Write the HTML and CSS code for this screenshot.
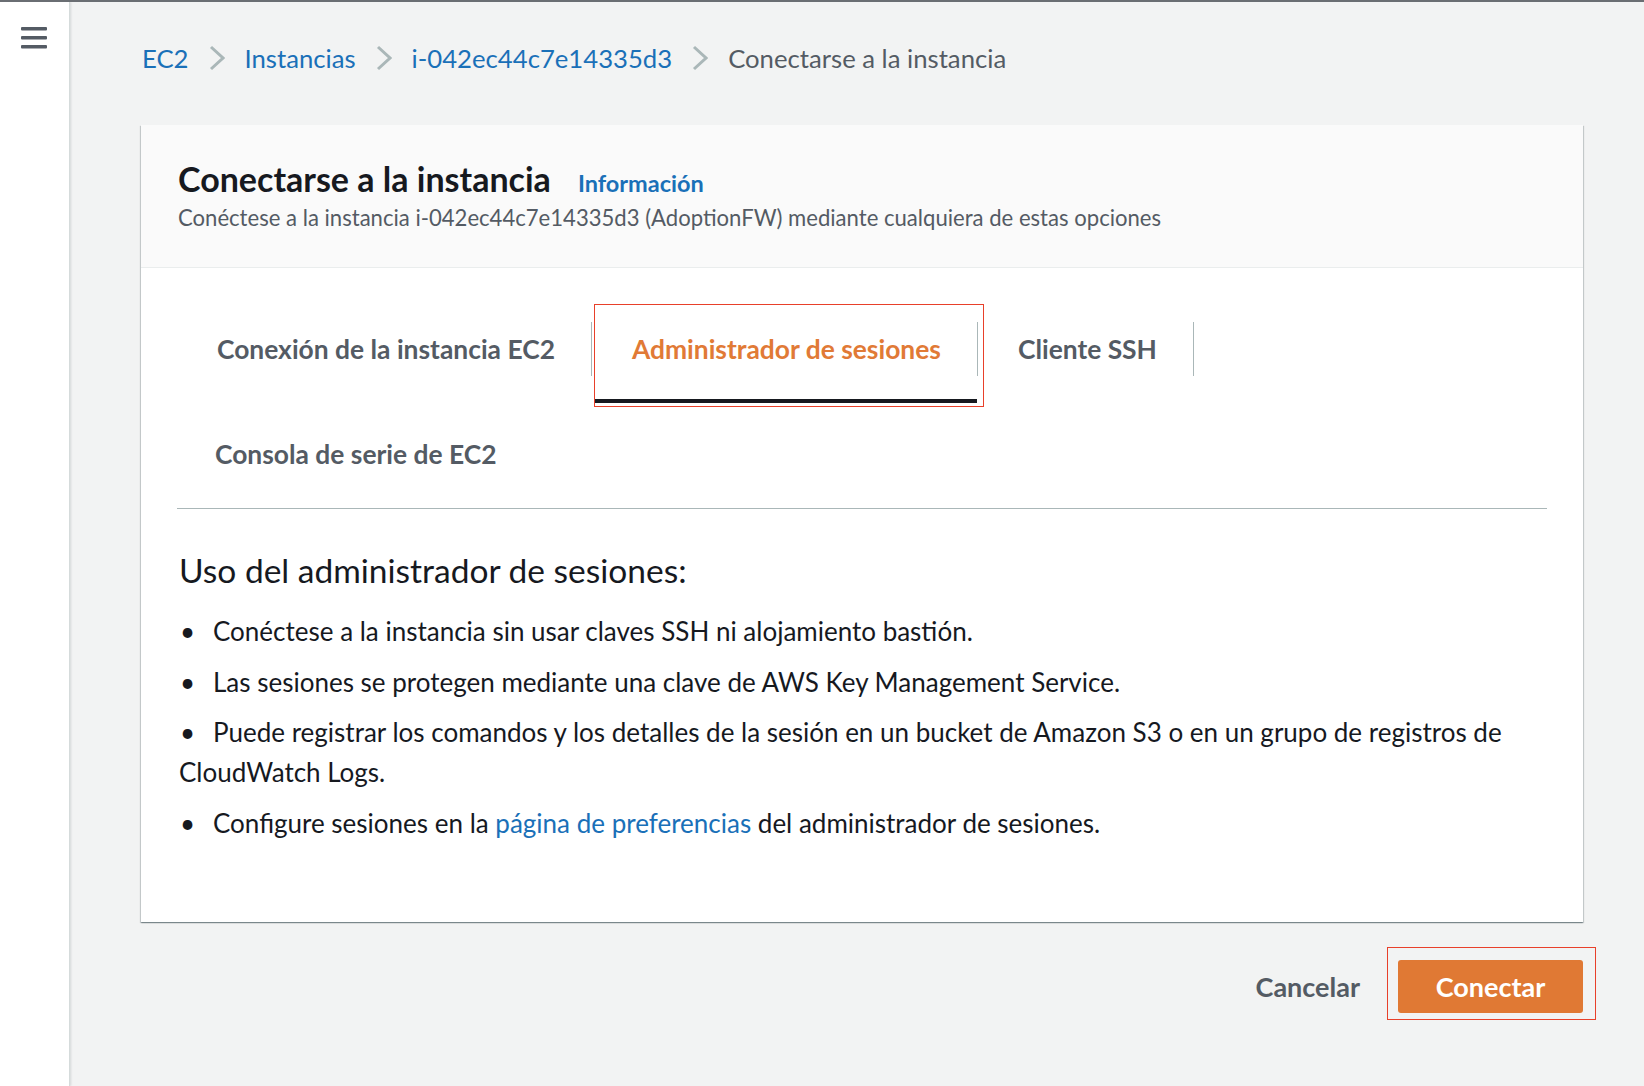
FILE: index.html
```html
<!DOCTYPE html>
<html lang="es">
<head>
<meta charset="utf-8">
<title>Conectarse a la instancia</title>
<link rel="stylesheet" href="styles.css">
</head>
<body>
<div class="layout">
  <aside class="sidebar">
    <svg class="menu-icon" width="26" height="22" viewBox="0 0 26 22" aria-hidden="true">
      <rect x="0" y="0" width="26" height="3.5" rx="1" fill="#545b64"/>
      <rect x="0" y="9" width="26" height="3.5" rx="1" fill="#545b64"/>
      <rect x="0" y="18" width="26" height="3.5" rx="1" fill="#545b64"/>
    </svg>
  </aside>
  <main class="main">
    <nav class="breadcrumbs">
      <a class="crumb link" href="#">EC2</a>
      <svg class="chev" width="16" height="26" viewBox="0 0 16 26" aria-hidden="true"><polyline points="2,2 14,13 2,24" fill="none" stroke="#aab7b8" stroke-width="3"/></svg>
      <a class="crumb link" href="#">Instancias</a>
      <svg class="chev" width="16" height="26" viewBox="0 0 16 26" aria-hidden="true"><polyline points="2,2 14,13 2,24" fill="none" stroke="#aab7b8" stroke-width="3"/></svg>
      <a class="crumb link" href="#">i-042ec44c7e14335d3</a>
      <svg class="chev" width="16" height="26" viewBox="0 0 16 26" aria-hidden="true"><polyline points="2,2 14,13 2,24" fill="none" stroke="#aab7b8" stroke-width="3"/></svg>
      <span class="crumb current">Conectarse a la instancia</span>
    </nav>

    <section class="card">
      <header class="card-header">
        <div class="title-row">
          <h1 class="title">Conectarse a la instancia</h1>
          <a class="info link" href="#">Información</a>
        </div>
        <p class="subtitle">Conéctese a la instancia i-042ec44c7e14335d3 (AdoptionFW) mediante cualquiera de estas opciones</p>
      </header>

      <div class="card-body">
        <div class="tabs">
          <div class="tab"><span class="tab-label">Conexión de la instancia EC2</span></div>
          <div class="tab active"><span class="tab-label">Administrador de sesiones</span><span class="annot annot-tab"></span></div>
          <div class="tab"><span class="tab-label">Cliente SSH</span></div>
          <div class="tab-break"></div>
          <div class="tab last"><span class="tab-label">Consola de serie de EC2</span></div>
        </div>

        <div class="content">
          <h2 class="section-title">Uso del administrador de sesiones:</h2>
          <ul class="bullets">
            <li>Conéctese a la instancia sin usar claves SSH ni alojamiento bastión.</li>
            <li>Las sesiones se protegen mediante una clave de AWS Key Management Service.</li>
            <li>Puede registrar los comandos y los detalles de la sesión en un bucket de Amazon S3 o en un grupo de registros de CloudWatch Logs.</li>
            <li>Configure sesiones en la <a class="link" href="#">página de preferencias</a> del administrador de sesiones.</li>
          </ul>
        </div>
      </div>
    </section>

    <div class="actions">
      <button class="btn btn-link" type="button">Cancelar</button>
      <div class="btn-wrap">
        <button class="btn btn-primary" type="button">Conectar</button>
        <span class="annot annot-btn"></span>
      </div>
    </div>
  </main>
</div>
</body>
</html>
```

FILE: styles.css
```css
html, body {
  margin: 0;
  padding: 0;
}

body {
  font-family: Lato, "Open Sans", "Liberation Sans", sans-serif;
  color: #16191f;
  background: #f2f3f3;
  border-top: 2px solid #6a6e73;
}

.layout {
  display: flex;
  min-height: calc(100vh - 2px);
}

.sidebar {
  width: 70px;
  flex: 0 0 70px;
  background: #ffffff;
  border-right: 1px solid #d5dbdb;
  box-shadow: 1px 0 2px rgba(0, 28, 36, 0.12);
  box-sizing: border-box;
  padding: 25px 0 0 21px;
}

.menu-icon {
  display: block;
}

.main {
  flex: 1;
  padding: 40px 61px 0 71px;
  min-width: 0;
}

.link {
  color: #1a70b8;
  text-decoration: none;
}

/* Breadcrumbs */
.breadcrumbs {
  display: flex;
  align-items: center;
  height: 32px;
  padding-left: 1px;
  font-size: 25.7px;
  line-height: 32px;
}

.chev {
  display: block;
  margin: 0 20px;
}

.crumb.current {
  color: #545b64;
}

/* Card */
.card {
  margin-top: 51px;
  background: #ffffff;
  box-shadow: 0 1px 1px 0 rgba(0, 28, 36, 0.3), 1px 1px 1px 0 rgba(0, 28, 36, 0.15), -1px 1px 1px 0 rgba(0, 28, 36, 0.15);
}

.card-header {
  background: #fafafa;
  border-bottom: 1px solid #eaeded;
  padding: 34px 37px 35px 37px;
}

.title-row {
  display: flex;
  align-items: baseline;
}

.title {
  margin: 0;
  font-size: 34px;
  line-height: 40px;
  font-weight: 700;
  color: #16191f;
}

.info {
  margin-left: 27px;
  font-size: 23.5px;
  font-weight: 700;
}

.subtitle {
  margin: 5px 0 0 0;
  font-size: 22.1px;
  line-height: 28px;
  color: #545b64;
}

.card-body {
  padding: 36px 36px 69px 36px;
}

/* Tabs */
.tabs {
  display: flex;
  flex-wrap: wrap;
  border-bottom: 1px solid #aab7b8;
}

.tab-break {
  flex-basis: 100%;
  height: 0;
}

.tab {
  position: relative;
  display: flex;
  flex-direction: column;
  height: 102px;
  box-sizing: border-box;
  padding-top: 18px;
  font-size: 26.4px;
  font-weight: 700;
  color: #545b64;
}

.tab-label {
  display: block;
  padding: 0 36px 0 40px;
  line-height: 54px;
  border-right: 1px solid #aab7b8;
  white-space: nowrap;
}

.tab.last {
  padding-top: 21px;
}

.tab.last .tab-label {
  border-right-color: transparent;
  padding-left: 38px;
}

.tab.active {
  color: #e17a36;
}

.tab.active::after {
  content: "";
  display: block;
  height: 4px;
  margin: 23px 1px 0 3px;
  background: #16191f;
}

/* Annotation boxes drawn over the screenshot */
.annot {
  position: absolute;
  border: 1.5px solid #e8402a;
  pointer-events: none;
}

.annot-tab {
  top: 0;
  left: 2px;
  right: -6px;
  bottom: -1px;
}

/* Content */
.content {
  padding: 41px 0 0 2px;
}

.section-title {
  margin: 0;
  font-size: 33.5px;
  line-height: 40px;
  font-weight: 400;
  color: #16191f;
}

.bullets {
  list-style: none;
  margin: 21px 0 0 0;
  padding: 0;
  font-size: 26px;
  line-height: 40px;
}

.bullets li {
  margin-bottom: 10.5px;
}

.bullets li::before {
  content: "\2022";
  display: inline-block;
  width: 34px;
  padding-left: 1px;
  box-sizing: border-box;
}

/* Actions */
.actions {
  display: flex;
  justify-content: flex-end;
  align-items: center;
  margin-top: 38px;
}

.btn {
  font-family: inherit;
  font-size: 27px;
  font-weight: 700;
  border: none;
  cursor: pointer;
}

.btn-link {
  background: transparent;
  color: #545b64;
  padding: 0 20px;
  height: 53px;
  margin-right: 18px;
}

.btn-wrap {
  position: relative;
}

.btn-primary {
  display: block;
  background: #e07934;
  color: #ffffff;
  height: 53px;
  width: 185px;
  padding: 0;
  border-radius: 3px;
}

.annot-btn {
  top: -13px;
  left: -11px;
  right: -13px;
  bottom: -7px;
}
```
